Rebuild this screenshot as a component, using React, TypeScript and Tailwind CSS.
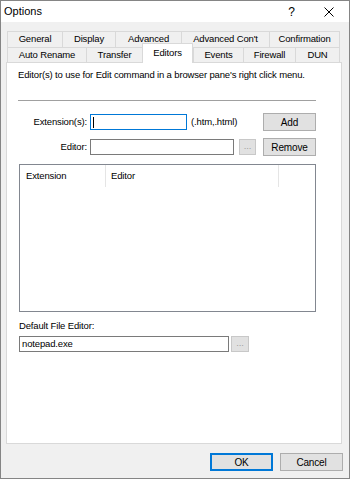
import React from 'react';

const ROW1 = [
  { label: 'General', w: 'w-[55px]' },
  { label: 'Display', w: 'w-[53px]' },
  { label: 'Advanced', w: 'w-[66px]' },
  { label: "Advanced Con't", w: 'w-[88px]' },
  { label: 'Confirmation', w: 'w-[71px]' },
];

const ROW2 = [
  { label: 'Auto Rename', w: 'w-[79px]' },
  { label: 'Transfer', w: 'w-[56px]' },
  { label: 'Editors', w: 'w-[51px]', active: true },
  { label: 'Events', w: 'w-[50px]' },
  { label: 'Firewall', w: 'w-[52px]' },
  { label: 'DUN', w: 'w-[45px]' },
];

const font = { fontFamily: '"Liberation Sans", Arial, sans-serif' };

const Tab = ({ label, w, last, active }: { label: string; w: string; last?: boolean; active?: boolean }) => (
  <div
    className={`${w} flex items-center justify-center border-t border-l border-[#d9d9d9] ${last ? 'border-r' : ''} ${
      active ? 'h-[20px] -mb-[1px] bg-white border-r' : 'h-[15px] bg-[#f0f0f0]'
    }`}
  >
    <span className="whitespace-nowrap">{label}</span>
  </div>
);

const SmallBtn = ({ w }: { w: string }) => (
  <div className={`${w} h-[16px] bg-[#e1e1e1] border border-[#c8c8c8] flex items-center justify-center text-[#a0a0a0] leading-none pb-[3px]`}>
    ...
  </div>
);

export default function App() {
  return (
    <div
      className="w-[350px] h-[479px] border border-[#858585] flex flex-col text-[9.5px] tracking-[-0.15px] text-black select-none"
      style={font}
    >
      {/* Title bar */}
      <div className="h-[21px] bg-white flex items-center pl-[3px] shrink-0">
        <span className="text-[11px] tracking-normal">Options</span>
        <span className="ml-auto mr-[29px] text-[12px] tracking-normal">?</span>
        <svg width="10" height="10" viewBox="0 0 10 10" className="mr-[15px]">
          <path d="M0.5 0.5 L9.5 9.5 M9.5 0.5 L0.5 9.5" stroke="#000" strokeWidth="1" />
        </svg>
      </div>

      {/* Body */}
      <div className="flex-1 bg-[#f0f0f0] pt-[9px] px-[5px] flex flex-col">
        {/* Tabs */}
        <div className="flex ml-[1px]">
          {ROW1.map((t, i) => (
            <div key={t.label} className={`${t.w} h-[16px] flex items-center justify-center border-t border-l border-[#d9d9d9] ${i === ROW1.length - 1 ? 'border-r' : ''}`}>
              <span className="whitespace-nowrap pb-[1px]">{t.label}</span>
            </div>
          ))}
        </div>
        <div className="flex items-end ml-[1px] -mt-[4px] h-[19px] relative z-10">
          {ROW2.map((t, i) => (
            <Tab key={t.label} label={t.label} w={t.w} active={t.active} last={i === ROW2.length - 1} />
          ))}
        </div>

        {/* Panel */}
        <div className="h-[382px] w-[336px] bg-white border border-[#d9d9d9] pt-[6px] pl-[11px]">
          <div className="leading-[12px] whitespace-nowrap">
            Editor(s) to use for Edit command in a browser pane's right click menu.
          </div>
          <div className="mt-[19px] w-[298px] h-[1px] bg-[#a0a0a0]" />

          <div className="ml-[1px] w-[297px]">
            {/* Extension row */}
            <div className="mt-[12px] h-[18px] flex items-center">
              <div className="w-[68px] text-right">Extension(s):</div>
              <div className="ml-[3px] w-[97px] h-[16px] border border-[#0078d7] flex items-center pl-[2px]">
                <div className="w-[1px] h-[11px] bg-black" />
              </div>
              <div className="ml-[4px]">(.htm,.html)</div>
              <div className="ml-auto w-[53px] h-[18px] bg-[#e1e1e1] border border-[#adadad] flex items-center justify-center text-[10px]">
                Add
              </div>
            </div>

            {/* Editor row */}
            <div className="mt-[7px] h-[18px] flex items-center">
              <div className="w-[68px] text-right">Editor:</div>
              <div className="ml-[3px] w-[144px] h-[16px] border border-[#7a7a7a] bg-white" />
              <div className="ml-[5px]">
                <SmallBtn w="w-[17px]" />
              </div>
              <div className="ml-auto w-[53px] h-[18px] bg-[#e1e1e1] border border-[#adadad] flex items-center justify-center text-[10px]">
                Remove
              </div>
            </div>

            {/* List view */}
            <div className="mt-[8px] h-[148px] border border-[#828790] bg-white">
              <div className="h-[22px] flex">
                <div className="w-[86px] border-r border-[#e5e5e5] pl-[6px] flex items-center">Extension</div>
                <div className="w-[173px] border-r border-[#e5e5e5] pl-[5px] flex items-center">Editor</div>
                <div className="flex-1" />
              </div>
            </div>

            {/* Default file editor */}
            <div className="mt-[8px] leading-[12px]">Default File Editor:</div>
            <div className="mt-[4px] flex items-center">
              <div className="w-[210px] h-[16px] border border-[#7a7a7a] flex items-center pl-[2px] leading-none">
                notepad.exe
              </div>
              <div className="ml-[2px]">
                <SmallBtn w="w-[18px]" />
              </div>
            </div>
          </div>
        </div>

        {/* Dialog buttons */}
        <div className="mt-[9px] flex justify-end gap-[7px] pr-[1px]">
          <div className="w-[63px] h-[18px] bg-[#e1e1e1] border-2 border-[#0078d7] flex items-center justify-center text-[10px]">
            OK
          </div>
          <div className="w-[63px] h-[18px] bg-[#e1e1e1] border border-[#adadad] flex items-center justify-center text-[10px]">
            Cancel
          </div>
        </div>
      </div>
    </div>
  );
}
